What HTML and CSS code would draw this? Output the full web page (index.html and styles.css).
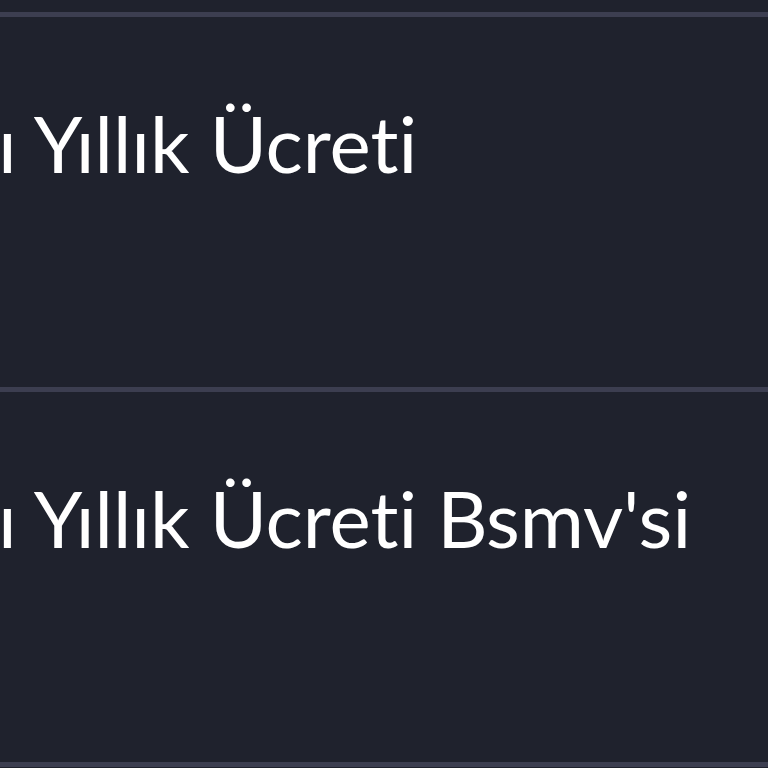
FILE: index.html
```html
<!DOCTYPE html>
<html lang="tr">
<head>
<meta charset="utf-8">
<link rel="stylesheet" href="styles.css">
</head>
<body>
<div class="list">
  <div class="top"></div>
  <div class="row"><span class="label">ı Yıllık Ücreti</span></div>
  <div class="row"><span class="label">ı Yıllık Ücreti Bsmv'si</span></div>
</div>
</body>
</html>
```
FILE: styles.css
```css
html, body {
  margin: 0;
  padding: 0;
  background: #1f222d;
  width: 768px;
  height: 768px;
  overflow: hidden;
}
.list {
  display: flex;
  flex-direction: column;
}
.top {
  height: 12px;
  border-bottom: 5px solid #3c3e50;
}
.row {
  height: 370px;
  box-sizing: content-box;
  border-bottom: 5px solid #3c3e50;
  display: flex;
  align-items: flex-start;
  padding-top: 0;
}
.label {
  font-family: Lato, "Noto Sans", sans-serif;
  font-size: 78px;
  color: #ffffff;
  white-space: nowrap;
  margin-left: -2px;
  line-height: 1;
  margin-top: 87px;
  font-variant-ligatures: none;
}
```
